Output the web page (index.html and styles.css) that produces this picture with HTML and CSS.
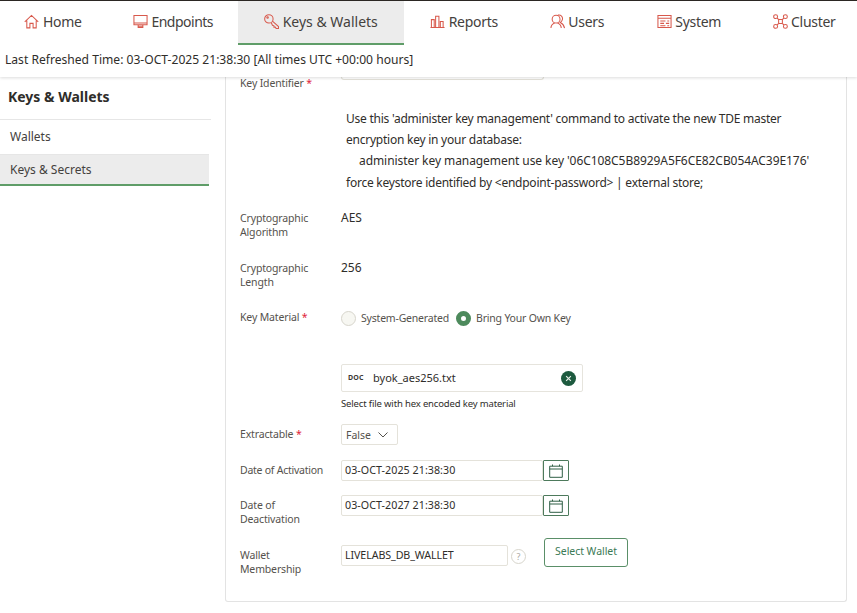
FILE: index.html
```html
<!DOCTYPE html>
<html lang="en">
<head>
<meta charset="utf-8">
<title>Keys &amp; Wallets</title>
<link rel="stylesheet" href="styles.css">
</head>
<body>
<header class="top">
  <nav class="nav">
    <a class="tab t-home"><svg class="ico" viewBox="0 0 16 16"><path d="M.8 8.5 8 1.5 15.2 8.5M3 7V14.8H6.3V10H9.7V14.8H13V7"/></svg>Home</a>
    <a class="tab t-end"><svg class="ico" viewBox="0 0 16 16"><path d="M1 1.5H15V11.5H1ZM1 9.5H15M5.5 11.5V14.5H10.5V11.5M5.5 13H10.5"/></svg>Endpoints</a>
    <a class="tab t-keys active"><svg class="ico" viewBox="0 0 16 16"><circle cx="5.2" cy="5.2" r="4.5"/><path d="M9 7.6 15.5 13.4V15.5H13L12 14H10.6V12.6L9 12 7.8 9.3"/><circle cx="3.8" cy="3.8" r=".8"/></svg>Keys &amp; Wallets</a>
    <a class="tab t-rep"><svg class="ico" viewBox="0 0 16 16"><path d="M.5 14.5H15.5M1.5 14.5V6H4.5V14.5M6 14.5V2.5H9.5V14.5M11 14.5V8H14V14.5"/></svg>Reports</a>
    <a class="tab t-usr"><svg class="ico" viewBox="0 0 16 16"><circle cx="6.5" cy="5.5" r="4.2"/><path d="M1 15C1 12.5 3 10.3 5 9.5M8 9.5C10 10.3 12 12.5 12 15M8.5 1.2C11.5.5 14 3 13.2 6 12.8 7.5 11.8 8.5 11 9 13 10 15 12 15.5 15"/></svg>Users</a>
    <a class="tab t-sys"><svg class="ico" viewBox="0 0 16 16"><path d="M1 1.5H15V14.5H1ZM1 4.5H15M3.5 7.5H9M3.5 10H7.5M3.5 12.5H9M11 7.5H13M9.5 10H13M11 12.5H13"/></svg>System</a>
    <a class="tab t-clu"><svg class="ico" viewBox="0 0 16 16"><circle cx="2.8" cy="2.8" r="2.1"/><circle cx="13.2" cy="2.8" r="2.1"/><circle cx="2.8" cy="13.2" r="2.1"/><circle cx="13.2" cy="13.2" r="2.1"/><path d="M4.3 4.3 6 5.8H10L11.7 4.3M6 5.8V10.2M10 5.8V10.2M4.3 11.7 6 10.2H10L11.7 11.7"/></svg>Cluster</a>
  </nav>
  <p class="refresh">Last Refreshed Time: 03-OCT-2025 21:38:30 [All times UTC +00:00 hours]</p>
</header>
<div class="page">
  <aside class="side">
    <h2 class="side-title">Keys &amp; Wallets</h2>
    <a class="side-item">Wallets</a>
    <a class="side-item current">Keys &amp; Secrets</a>
  </aside>
  <main class="card">
    <div class="row r-id">
      <span class="label">Key Identifier <b class="req">*</b></span>
      <span class="stub"></span>
    </div>
    <div class="help">
      Use this 'administer key management' command to activate the new TDE master<br>
      encryption key in your database:<br>
      <span class="indent">administer key management use key '06C108C5B8929A5F6CE82CB054AC39E176'</span><br>
      force keystore identified by &lt;endpoint-password&gt; | external store;
    </div>
    <div class="row r-alg">
      <span class="label">Cryptographic Algorithm</span>
      <span class="value">AES</span>
    </div>
    <div class="row r-len">
      <span class="label">Cryptographic Length</span>
      <span class="value">256</span>
    </div>
    <div class="row r-mat">
      <span class="label">Key Material <b class="req">*</b></span>
      <div class="radios">
        <span class="radio"></span><span class="radio-text">System-Generated</span>
        <span class="radio on"></span><span class="radio-text">Bring Your Own Key</span>
      </div>
    </div>
    <div class="row r-file">
      <span></span>
      <div>
        <div class="file"><span class="doc">DOC</span><span class="fname">byok_aes256.txt</span>
          <svg class="clear" viewBox="0 0 14 14"><circle cx="7" cy="7" r="7"/><path d="M4.8 4.8 9.2 9.2M9.2 4.8 4.8 9.2"/></svg>
        </div>
        <p class="hint">Select file with hex encoded key material</p>
      </div>
    </div>
    <div class="row r-ext">
      <span class="label">Extractable <b class="req">*</b></span>
      <div class="select">False<svg class="chev" viewBox="0 0 10 6"><path d="M.5.5 5 5 9.5.5"/></svg></div>
    </div>
    <div class="row r-act">
      <span class="label">Date of Activation</span>
      <div class="date"><span class="input date-input">03-OCT-2025 21:38:30</span><span class="cal"><svg class="cal-ico" viewBox="0 0 14 14"><path d="M.7 2.2H13.3V13.3H.7ZM.7 5H13.3M3.5.5V2.2M10.5.5V2.2"/></svg></span></div>
    </div>
    <div class="row r-deact">
      <span class="label">Date of Deactivation</span>
      <div class="date"><span class="input date-input">03-OCT-2027 21:38:30</span><span class="cal"><svg class="cal-ico" viewBox="0 0 14 14"><path d="M.7 2.2H13.3V13.3H.7ZM.7 5H13.3M3.5.5V2.2M10.5.5V2.2"/></svg></span></div>
    </div>
    <div class="row r-wal">
      <span class="label">Wallet Membership</span>
      <div class="wallet">
        <span class="input wal-input">LIVELABS_DB_WALLET</span>
        <span class="q">?</span>
        <span class="btn">Select Wallet</span>
      </div>
    </div>
  </main>
</div>
</body>
</html>
```
FILE: styles.css
```css
* { box-sizing: border-box; }
html, body { margin: 0; padding: 0; height: 100%; overflow: hidden; }
body { width: 857px; height: 613px; background: #fff; color: #3c3a37; font-family: "Noto Sans", "Open Sans", sans-serif; font-size: 12px; }

.top { height: 77px; position: relative; z-index: 2; background: #fff; border-top: 1px solid #2b2723; box-shadow: 0 1px 3px rgba(0,0,0,.14); }
.nav { display: flex; height: 44px; }
.tab { display: flex; flex: none; align-items: center; justify-content: center; gap: 3.5px; height: 44px; font-size: 14px; color: #44413d; padding-bottom: 3px; white-space: nowrap; letter-spacing: -.3px; }
.t-home { width: 104px; padding-left: 2px; }
.t-end { width: 134px; padding-left: 4px; letter-spacing: -.5px; }
.t-keys { width: 166px; }
.t-rep { width: 120px; }
.t-usr { width: 106px; }
.t-sys { width: 117px; padding-left: 1px; }
.t-clu { width: 114px; }
.tab.active { background: #ececec; border-bottom: 2px solid #5f9d68; padding-bottom: 1px; letter-spacing: 0; }
.ico { width: 15px; height: 15px; fill: none; stroke: #d8594c; stroke-width: 1.1; flex: none; }
.refresh { margin: 0; padding: 6px 0 0 5px; font-size: 12.1px; line-height: 18px; color: #2f2d2a; }

.page { display: flex; height: 536px; }
.side { width: 225px; flex: none; padding-top: 7px; }
.side-title { margin: 0; padding: 3px 0 0 8px; height: 36px; font-size: 14px; line-height: 20px; font-weight: 700; color: #2f2d2a; width: 211px; border-bottom: 1px solid #e6e6e6; }
.side-item { display: block; width: 209px; height: 33px; line-height: 33px; padding-left: 10px; font-size: 12px; color: #44413d; }
.side-item.current { line-height: 30px; background: #ececec; border-bottom: 2px solid #5f9d68; border-top: 1px solid #e6e6e6; margin-top: 1px; height: 32px; }

.card { width: 622px; height: 525px; border: 1px solid #e3e3e3; border-top: 0; border-radius: 0 0 3px 3px; padding-left: 14px; }
.row { display: grid; grid-template-columns: 101px 1fr; }
.label { font-size: 10.5px; line-height: 14px; color: #55524d; width: 78px; letter-spacing: -.15px; }
.r-id .label, .r-mat .label, .r-ext .label, .r-act .label { width: auto; white-space: nowrap; }
.r-act .label { letter-spacing: -.25px; }
.req { color: #e0243a; font-weight: 400; margin-left: 0; }
.value { font-size: 12px; line-height: 14px; color: #2f2d2a; }

.r-id { height: 31px; }
.r-id .label { transform: translateY(-1px); }
.stub { display: block; width: 203px; height: 3px; border: 1px solid #e4e2da; border-top: 0; border-radius: 0 0 3px 3px; }
.help { padding-left: 106px; font-size: 12px; line-height: 21.2px; color: #2f2d2a; height: 103px; white-space: nowrap; letter-spacing: -.24px; }
.indent { padding-left: 13px; letter-spacing: -.07px; }
.r-alg { height: 50px; }
.r-len { height: 50px; }
.r-mat { height: 53px; }
.r-mat .label { transform: translateY(-1px); }
.radios { display: flex; align-items: center; height: 14px; font-size: 10.5px; color: #55524d; letter-spacing: -.2px; }
.radio { width: 15px; height: 15px; border-radius: 50%; border: 1px solid #d7d5cc; background: #f7f7f2; flex: none; }
.radio.on { background: #fff; border: 5px solid #4d8a5c; }
.radio-text { margin: 0 7px 0 5px; }
.r-file { height: 60px; }
.file { display: flex; align-items: center; width: 242px; height: 28px; border: 1px solid #e6e4dd; border-radius: 2px; padding: 0 6px 2px; font-size: 11px; color: #2f2d2a; }
.doc { font-size: 7px; font-weight: 700; width: 25px; letter-spacing: .2px; color: #3c3a37; }
.fname { flex: 1; }
.clear { width: 15px; height: 15px; flex: none; margin-top: 2px; }
.clear circle { fill: #1d5a3f; }
.clear path { stroke: #e8efe9; stroke-width: 1.1; fill: none; }
.hint { margin: 5px 0 0; font-size: 9.5px; line-height: 14px; color: #2f2d2a; white-space: nowrap; letter-spacing: -.15px; }
.r-ext { height: 36px; align-items: start; }
.r-ext .label { padding-top: 3px; }
.select { display: flex; align-items: center; justify-content: space-between; width: 57px; height: 21px; border: 1px solid #e4e2da; border-radius: 2px; padding: 0 9px 0 4px; font-size: 10.5px; color: #55524d; }
.chev { width: 10px; height: 6px; fill: none; stroke: #55524d; stroke-width: 1; }
.r-act .label { padding-top: 3px; }
.r-act { height: 35px; }
.r-deact { height: 43px; }
.r-deact .label { padding-top: 3px; }
.date { display: flex; height: 21px; }
.input { display: block; height: 21px; line-height: 19px; border: 1px solid #e4e2da; border-radius: 2px; padding-left: 3px; font-size: 10.7px; color: #2f2d2a; }
.date-input { width: 202px; letter-spacing: .05px; }
.cal { width: 26px; height: 21px; border: 1px solid #4d7a5c; border-radius: 1px; display: flex; align-items: center; justify-content: center; }
.cal-ico { width: 14px; height: 14px; fill: none; stroke: #2f5f45; stroke-width: 1; }
.r-wal { height: 50px; }
.r-wal .label { padding-top: 10px; }
.wallet { display: flex; align-items: flex-start; }
.wal-input { width: 167px; margin-top: 7px; letter-spacing: -.1px; }
.q { width: 15px; height: 15px; margin: 11px 0 0 3px; border: 1px solid #d7d5cc; border-radius: 50%; font-size: 9px; line-height: 13px; text-align: center; color: #aaa8a2; }
.btn { margin-left: 18px; width: 84px; height: 29px; border: 1.5px solid #5a8f68; border-radius: 3px; font-size: 10.5px; line-height: 25px; text-align: center; color: #3b7a55; letter-spacing: -.05px; }
```
